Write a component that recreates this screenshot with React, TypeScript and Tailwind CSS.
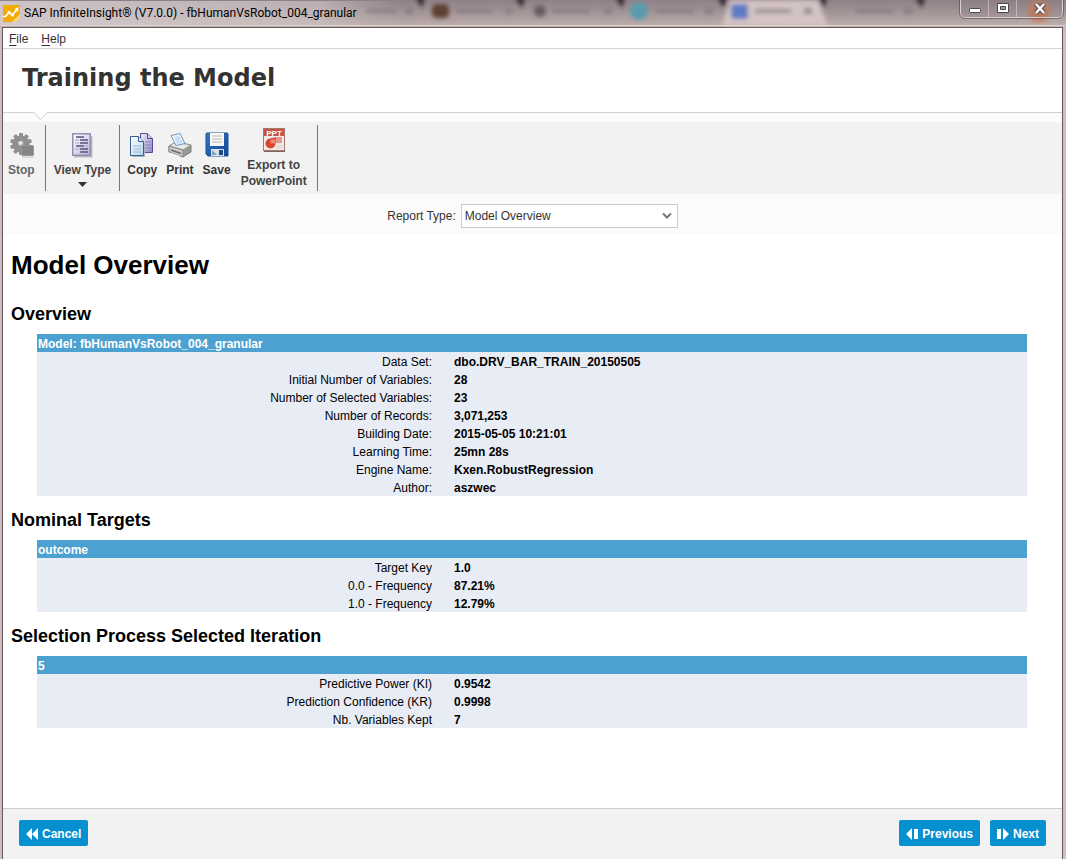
import React from "react";

type Row = [string, string];

function LogoIcon() {
  return (
    <svg width="17" height="17" viewBox="0 0 17 17" aria-hidden="true">
      <path d="M0 0h17v9l-8 8H0z" fill="#f2ab00" />
      <path d="M17 9v4l-4 4H9z" fill="#f8d377" />
      <path d="M0 11.500h2.500L6 7.500l3.500 2.500L14 4" fill="none" stroke="#fff" strokeWidth="1.700" />
      <path d="M11.500 4 15.500 2 15 7z" fill="#fff" />
      <circle cx="6" cy="7.300" r="1.500" fill="#fff" />
      <circle cx="9.500" cy="10" r="1.500" fill="#fff" />
    </svg>
  );
}

function GlassBackdrop() {
  const tabs = [420, 520, 620, 722, 822, 920];
  return (
    <svg
      className="absolute inset-0 h-full w-full"
      viewBox="0 0 1066 27"
      preserveAspectRatio="none"
      aria-hidden="true"
    >
      <defs>
        <linearGradient id="glass" x1="0" y1="0" x2="0" y2="1">
          <stop offset="0" stopColor="#8d8187" />
          <stop offset="0.500" stopColor="#a59799" />
          <stop offset="1" stopColor="#c0b0ae" />
        </linearGradient>
        <linearGradient id="pale" x1="0" y1="0" x2="1" y2="0">
          <stop offset="0" stopColor="#d9d0d1" stopOpacity="0.850" />
          <stop offset="0.800" stopColor="#cfc4c5" stopOpacity="0.650" />
          <stop offset="1" stopColor="#c4b8b8" stopOpacity="0" />
        </linearGradient>
        <filter id="soft" x="-20%" y="-50%" width="140%" height="200%">
          <feGaussianBlur stdDeviation="2.200" />
        </filter>
      </defs>
      <rect width="1066" height="27" fill="url(#glass)" />
      <rect y="1" width="400" height="24" fill="url(#pale)" />
      <g filter="url(#soft)">
        <path d="M722 26 730 0h88l10 26z" fill="#d3c4c3" />
        {tabs.map((x) => (
          <path key={x} d={`M${x - 5} -3h10l-3 11z`} fill="#30262f" />
        ))}
        <rect x="432" y="4" width="17" height="14" rx="5" fill="#5e4030" />
        <circle cx="540" cy="11" r="6" fill="#675c63" />
        <circle cx="639" cy="11" r="9" fill="#589cae" />
        <rect x="731" y="4" width="17" height="15" rx="3" fill="#5d7cc5" />
        <circle cx="1039" cy="11" r="11" fill="#c57b5b" />
        <g fill="#80747b" opacity="0.700">
          <rect x="366" y="9" width="30" height="4" />
          <rect x="405" y="8" width="8" height="6" />
          <rect x="456" y="9" width="36" height="4" />
          <rect x="505" y="8" width="7" height="6" />
          <rect x="552" y="9" width="38" height="4" />
          <rect x="604" y="8" width="8" height="6" />
          <rect x="656" y="9" width="38" height="4" />
          <rect x="705" y="8" width="8" height="6" />
          <rect x="755" y="9" width="36" height="4" />
          <rect x="804" y="8" width="8" height="6" />
          <rect x="855" y="9" width="38" height="4" />
          <rect x="904" y="8" width="8" height="6" />
        </g>
      </g>
      <path d="M0 25.500h1066" stroke="#dcd2d1" />
    </svg>
  );
}

function StopIcon() {
  return (
    <svg width="26" height="26" viewBox="0 0 26 26" aria-hidden="true">
      <g fill="#8f8f8f">
        <circle cx="13" cy="12" r="8.500" />
        {[0, 36, 72, 108, 144, 180, 216, 252, 288, 324].map((a) => (
          <rect key={a} x="11" y="1" width="4" height="5" rx="1" transform={`rotate(${a} 13 12)`} />
        ))}
      </g>
      <circle cx="13" cy="11.500" r="3" fill="#a5a5a5" />
      <circle cx="12.500" cy="11" r="2" fill="#e9e9e9" />
      <rect x="13.500" y="13.500" width="12" height="10" rx="1" fill="#858585" stroke="#999" />
      <path d="M14 25h12" fill="none" stroke="#c5c5c5" />
    </svg>
  );
}

function ViewTypeIcon() {
  return (
    <svg width="26" height="26" viewBox="0 0 26 26" aria-hidden="true">
      <defs>
        <linearGradient id="sheet" x1="0" y1="0" x2="1" y2="1">
          <stop offset="0" stopColor="#fff" />
          <stop offset="1" stopColor="#b8b2da" />
        </linearGradient>
      </defs>
      <path d="M5 24.500h17.500V4" fill="none" stroke="#b9b9b9" strokeWidth="2" />
      <rect x="3" y="1" width="19" height="23" fill="#918fae" />
      <rect x="4.500" y="2.500" width="16" height="20" fill="url(#sheet)" />
      <path d="M7 5h8M11 8h8M11 11h8M7 14h8M11 17h8M11 20h8" stroke="#57547e" strokeWidth="1.300" />
      <path d="M6 8h4M6 11h4M16 14h3M6 17h4" stroke="#aaa6ce" />
    </svg>
  );
}

function CopyIcon() {
  return (
    <svg width="26" height="26" viewBox="0 0 26 26" aria-hidden="true">
      <defs>
        <linearGradient id="back-page" x1="0" y1="0" x2="1" y2="1">
          <stop offset="0" stopColor="#f1effb" />
          <stop offset="1" stopColor="#9188c4" />
        </linearGradient>
        <linearGradient id="front-page" x1="0" y1="0" x2="1" y2="1">
          <stop offset="0" stopColor="#fff" />
          <stop offset="1" stopColor="#b9d5ee" />
        </linearGradient>
      </defs>
      <path d="M11.500 1.500h7l5 5v14h-12z" fill="url(#back-page)" stroke="#55499a" />
      <path d="M18.500 1.500v5h5" fill="#d4cfee" stroke="#55499a" />
      <path d="M16 10h6M16 13h6M16 16h6" stroke="#8d82bd" />
      <path d="M1.500 4.500h8l5 5v14h-13z" fill="url(#front-page)" stroke="#366090" />
      <path d="M9.500 4.500v5h5" fill="#e5eff9" stroke="#366090" />
      <path d="M4 14h8M4 17h8M4 20h8" stroke="#9bbbdd" />
      <path d="M3 24.500h12.500V11" fill="none" stroke="#aab5c2" />
    </svg>
  );
}

function PrintIcon() {
  return (
    <svg width="26" height="26" viewBox="0 0 26 26" aria-hidden="true">
      <path d="m2 14 7-4 15 3v7l-8 5L2 20z" fill="#969996" stroke="#7d817e" />
      <path d="m2 14 7-4 15 3-8 5z" fill="#e8eae6" stroke="#949894" />
      <path d="M4 3.500 13 1.500l5 10-9 2z" fill="#edf6ff" stroke="#7597b7" />
      <path d="m7 5 5-1 4 7-6 1z" fill="#c7dff5" />
      <path d="M2 14v6l14 5v-7z" fill="#c9ccc8" stroke="#848884" />
      <path d="m4 18 10 3.500" stroke="#6c706d" strokeWidth="1.500" />
      <path d="m3 21 10 3.500" stroke="#f7f7f7" />
    </svg>
  );
}

function SaveIcon() {
  return (
    <svg width="26" height="26" viewBox="0 0 26 26" aria-hidden="true">
      <defs>
        <linearGradient id="disk" x1="0" y1="0" x2="1" y2="1">
          <stop offset="0" stopColor="#3975c3" />
          <stop offset="1" stopColor="#10459a" />
        </linearGradient>
      </defs>
      <path d="M2 2q0-1 1-1h20q1 0 1 1v22H4l-2-2z" fill="url(#disk)" stroke="#1d5199" />
      <path d="M6 1h14v13H6z" fill="#f7f7f7" />
      <path d="M8 4h10M8 7h10M8 10h10" stroke="#b4b4b4" />
      <path d="M7 17h13v7H7z" fill="#d8e4ed" />
      <path d="M15 18h4v5h-4z" fill="#194b88" />
      <path d="m8 18 5 5H8z" fill="#80a1b2" />
    </svg>
  );
}

function PptIcon() {
  return (
    <svg width="26" height="26" viewBox="0 0 26 26" aria-hidden="true">
      <rect x="2.500" y="1.500" width="21" height="22" fill="#f1eae7" stroke="#a47770" />
      <path d="M3 2h20v7H3z" fill="#c9533e" />
      <text x="13" y="8.500" textAnchor="middle" fill="#fff" fontFamily="Liberation Sans, sans-serif" fontSize="8" fontWeight="700">
        PPT
      </text>
      <rect x="12" y="10" width="9" height="6" fill="#e5998b" />
      <circle cx="9.500" cy="16.500" r="5" fill="#d94532" />
      <path d="M10 11h5v5h-5z" fill="#d94532" />
      <path d="M9.500 16.500h5v-4h-5z" fill="#ee8a76" />
      <path d="M15 19h7M15 21h7" stroke="#ded3ce" />
      <path d="M3 24.500h21" stroke="#83635f" />
    </svg>
  );
}

function ToolButton({ icon, label, disabled = false }: { icon: React.ReactNode; label: string; disabled?: boolean }) {
  return (
    <button
      type="button"
      disabled={disabled}
      className="flex flex-col items-center gap-1 pt-[7px] text-[12px] leading-4 font-bold text-[#333] disabled:text-[#666]"
    >
      {icon}
      <span>{label}</span>
    </button>
  );
}

function ReportTable({ title, rows }: { title: string; rows: Row[] }) {
  return (
    <div className="pr-[27px] pl-[26px]">
      <table className="w-full table-fixed border-collapse bg-[#e8ecf5] text-[12px] leading-4">
        <colgroup>
          <col className="w-2/5" />
          <col />
        </colgroup>
        <thead>
          <tr>
            <th colSpan={2} className="bg-[#4ca1d0] px-px pt-0.5 pb-0 text-left font-bold text-white">
              {title}
            </th>
          </tr>
        </thead>
        <tbody>
          {rows.map(([label, value]) => (
            <tr key={label}>
              <th scope="row" className="px-px pt-0.5 pb-0 text-right font-normal">
                {label}
              </th>
              <td className="pt-0.5 pr-0 pb-0 pl-[21px] font-bold">{value}</td>
            </tr>
          ))}
        </tbody>
      </table>
    </div>
  );
}

const overview: Row[] = [
  ["Data Set:", "dbo.DRV_BAR_TRAIN_20150505"],
  ["Initial Number of Variables:", "28"],
  ["Number of Selected Variables:", "23"],
  ["Number of Records:", "3,071,253"],
  ["Building Date:", "2015-05-05 10:21:01"],
  ["Learning Time:", "25mn 28s"],
  ["Engine Name:", "Kxen.RobustRegression"],
  ["Author:", "aszwec"],
];

const targets: Row[] = [
  ["Target Key", "1.0"],
  ["0.0 - Frequency", "87.21%"],
  ["1.0 - Frequency", "12.79%"],
];

const iteration: Row[] = [
  ["Predictive Power (KI)", "0.9542"],
  ["Prediction Confidence (KR)", "0.9998"],
  ["Nb. Variables Kept", "7"],
];

const navButton =
  "flex h-[26px] items-center gap-1 rounded-xs bg-[#0790d0] px-[7px] pt-px text-[12px] font-bold text-white";
const sectionTitle = "text-[18px] leading-5 font-bold";

export default function App() {
  return (
    <div className="flex min-h-screen flex-col bg-[#cfbcc0] font-['Liberation_Sans',Arial,sans-serif] text-black">
      <header className="relative h-[27px] shrink-0">
        <GlassBackdrop />
        <div className="relative flex h-full items-start justify-between pr-[3px] pl-[3px]">
          <div className="flex items-center gap-1 pt-1">
            <LogoIcon />
            <span className="font-[Roboto,sans-serif] text-[12px] leading-[18px]">
              SAP InfiniteInsight® (V7.0.0) - fbHumanVsRobot_004_granular
            </span>
          </div>
          <div className="flex h-[18px] rounded-b-[5px] border border-t-0 border-[#dbd0d1] bg-[#85797f]/20 outline outline-[#55494f]/60">
            <button type="button" aria-label="Minimize" className="flex w-7 items-center justify-center border-r border-[#c1b4b8]">
              <svg width="14" height="14" viewBox="0 0 14 14" aria-hidden="true">
                <rect x="1.500" y="6.500" width="11" height="4" rx="1" fill="#fff" stroke="#4c474d" />
              </svg>
            </button>
            <button type="button" aria-label="Maximize" className="flex w-7 items-center justify-center border-r border-[#c1b4b8]">
              <svg width="14" height="14" viewBox="0 0 14 14" aria-hidden="true">
                <path d="M1.500 1.500h11v9h-11z" fill="#fff" stroke="#4c474d" />
                <path d="M4.500 4.500h5v3h-5z" fill="#a39699" stroke="#4c474d" />
              </svg>
            </button>
            <button type="button" aria-label="Close" className="flex w-[45px] items-center justify-center">
              <svg width="14" height="14" viewBox="0 0 14 14" aria-hidden="true">
                <path d="m3 2 8 9m0-9-8 9" stroke="#4c474d" strokeWidth="4.500" />
                <path d="m3 2 8 9m0-9-8 9" stroke="#fff" strokeWidth="2.500" />
              </svg>
            </button>
          </div>
        </div>
      </header>

      <div className="mr-[3px] ml-0.5 flex flex-1 flex-col border-x border-t border-[#66595c] bg-white">
        <nav className="flex h-[21px] items-center gap-[13px] border-b border-[#d4d4d4] px-1.5 pt-0.5 text-[12px] text-[#333]">
          <button type="button"><u className="underline-offset-2">F</u>ile</button>
          <button type="button"><u className="underline-offset-2">H</u>elp</button>
        </nav>

        <div className="flex h-16 items-center border-b border-[#d2d2d2] px-[19px] pb-1.5">
          <h1 className="font-['DejaVu_Sans',Verdana,sans-serif] text-[24px] leading-8 font-bold text-[#333]">
            Training the Model
          </h1>
        </div>
        <div className="relative h-[9px] bg-[#fcfcfc]">
          <svg className="absolute -top-px left-[30px]" width="16" height="9" viewBox="0 0 16 9" aria-hidden="true">
            <path d="M1 0h13L7.500 7z" fill="#fff" />
            <path d="m1 .500 6.500 7 6.500-7" fill="none" stroke="#cfcfcf" />
          </svg>
        </div>

        <div className="flex h-[72px] items-center bg-[#f2f2f2]">
          <div className="flex h-[66px] border-r border-[#777] pr-2.5 pl-[5px]">
            <ToolButton icon={<StopIcon />} label="Stop" disabled />
          </div>
          <div className="flex h-[66px] border-r border-[#777] px-2">
            <button type="button" className="flex flex-col items-center gap-1 pt-[7px] text-[12px] leading-4 font-bold text-[#444]">
              <ViewTypeIcon />
              <span>View Type</span>
              <svg width="9" height="5" viewBox="0 0 9 5" aria-hidden="true"><path d="M0 0h9L4.500 5z" fill="#333" /></svg>
            </button>
          </div>
          <div className="flex h-[66px] gap-[9px] border-r border-[#777] pr-[9px] pl-[7px]">
            <ToolButton icon={<CopyIcon />} label="Copy" />
            <ToolButton icon={<PrintIcon />} label="Print" />
            <ToolButton icon={<SaveIcon />} label="Save" />
            <button type="button" className="flex flex-col items-center gap-1 px-px pt-0.5 text-[12px] leading-4 font-bold text-[#444]">
              <PptIcon />
              <span>Export to<br />PowerPoint</span>
            </button>
          </div>
        </div>

        <div className="flex h-10 items-center justify-center bg-[#fbfbfb] pt-1 text-[12px] text-[#333]">
          <label htmlFor="report-type" className="pr-[5px]">Report Type:</label>
          <div className="relative">
            <select
              id="report-type"
              defaultValue="Model Overview"
              className="h-6 w-[217px] appearance-none border border-[#ccc] bg-white pr-6 pl-[3px] text-[12px]"
            >
              <option>Model Overview</option>
            </select>
            <svg className="pointer-events-none absolute top-2 right-1.5" width="10" height="8" viewBox="0 0 10 8" aria-hidden="true">
              <path d="m1 1.500 4 4 4-4" fill="none" stroke="#777" strokeWidth="2" />
            </svg>
          </div>
        </div>

        <main className="flex-1 px-2 pt-[15px] pb-8">
          <h2 className="text-[26px] leading-8 font-bold">Model Overview</h2>
          <div className="flex flex-col gap-3.5 pt-[23px]">
            <section className="flex flex-col gap-2.5">
              <h3 className={sectionTitle}>Overview</h3>
              <ReportTable title="Model: fbHumanVsRobot_004_granular" rows={overview} />
            </section>
            <section className="flex flex-col gap-2.5">
              <h3 className={sectionTitle}>Nominal Targets</h3>
              <ReportTable title="outcome" rows={targets} />
            </section>
            <section className="flex flex-col gap-2.5">
              <h3 className={sectionTitle}>Selection Process Selected Iteration</h3>
              <ReportTable title="5" rows={iteration} />
            </section>
          </div>
        </main>

        <footer className="flex items-start justify-between border-t border-[#ccc] bg-[#f2f2f2] px-4 pt-[11px] pb-[13px]">
          <button type="button" className={navButton}>
            <svg width="12" height="12" viewBox="0 0 12 12" fill="#fff" aria-hidden="true">
              <path d="M6 0v12L0 6zM12 0v12L6 6z" />
            </svg>
            Cancel
          </button>
          <div className="flex gap-2.5">
            <button type="button" className={navButton}>
              <svg width="12" height="12" viewBox="0 0 12 12" fill="#fff" aria-hidden="true">
                <path d="M6 0v12L0 6zM8 1h4v10H8z" />
              </svg>
              Previous
            </button>
            <button type="button" className={navButton}>
              <svg width="12" height="12" viewBox="0 0 12 12" fill="#fff" aria-hidden="true">
                <path d="M0 1h4v10H0zM6 0l6 6-6 6z" />
              </svg>
              Next
            </button>
          </div>
        </footer>
      </div>
    </div>
  );
}
